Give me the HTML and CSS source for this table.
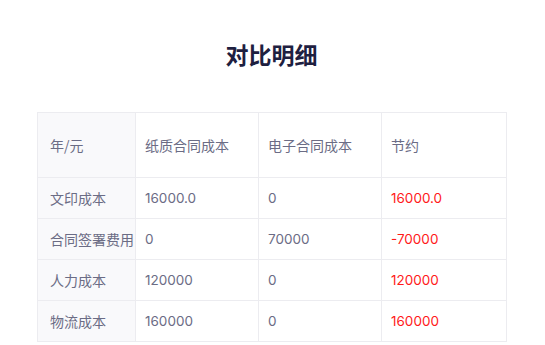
FILE: index.html
```html
<!DOCTYPE html>
<html lang="zh">
<head>
<meta charset="utf-8">
<link rel="stylesheet" href="styles.css">
</head>
<body>
<div class="page">
  <h1 class="title">对比明细</h1>
  <table class="cmp">
    <colgroup>
      <col class="c1"><col class="c2"><col class="c3"><col class="c4">
    </colgroup>
    <thead>
      <tr class="head"><th class="label">年/元</th><th>纸质合同成本</th><th>电子合同成本</th><th>节约</th></tr>
    </thead>
    <tbody>
      <tr><td class="label">文印成本</td><td class="num">16000.0</td><td class="num">0</td><td class="num red">16000.0</td></tr>
      <tr><td class="label">合同签署费用</td><td class="num">0</td><td class="num">70000</td><td class="num red">-70000</td></tr>
      <tr><td class="label">人力成本</td><td class="num">120000</td><td class="num">0</td><td class="num red">120000</td></tr>
      <tr><td class="label">物流成本</td><td class="num">160000</td><td class="num">0</td><td class="num red">160000</td></tr>
    </tbody>
  </table>
</div>
</body>
</html>
```
FILE: styles.css
```css
html, body { margin: 0; padding: 0; background: #fff; }
body { font-family: "Noto Sans CJK SC", "Inter", sans-serif; }
.page { padding: 0 39px 0 37px; }
.title {
  margin: 0 0 38px;
  padding-top: 38px;
  height: 74px;
  box-sizing: border-box;
  line-height: 32px;
  text-align: center;
  font-size: 23px;
  font-weight: 600;
  color: #1e2040;
}
.cmp {
  width: 469px;
  border-collapse: collapse;
  table-layout: fixed;
  font-size: 14px;
  color: #6b6c85;
}
.c1 { width: 98px; }
.c2 { width: 123px; }
.c3 { width: 123px; }
.c4 { width: 125px; }
.cmp th, .cmp td {
  border: 1px solid #ececf0;
  text-align: left;
  font-weight: 400;
  padding: 0 0 0 9px;
  height: 40px;
  white-space: nowrap;
}
.cmp .head th { height: 64px; }
.cmp .label { background: #f9f9fb; padding-left: 12px; }
.cmp .num { font-family: "Inter", "Noto Sans CJK SC", sans-serif; font-size: 13.5px; }
.red { color: #ff1a1a; }
```
